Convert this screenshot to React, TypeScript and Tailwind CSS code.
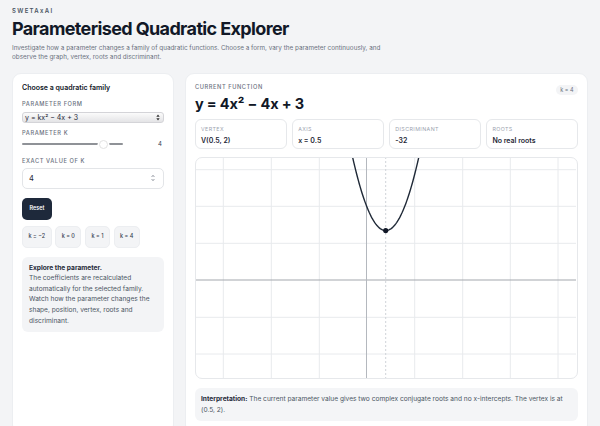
import React from "react";

const GX = 171.5; // y-axis pixel (relative to graph box)
const GY = 123; // x-axis pixel
const SX = 38.4;
const SY = 24.7;

function curvePath() {
  const pts: string[] = [];
  for (let i = 0; i <= 80; i++) {
    const x = -0.45 + (i / 80) * 1.9;
    const y = 4 * x * x - 4 * x + 3;
    const X = GX + SX * x;
    const Y = GY - SY * y;
    pts.push(`${i === 0 ? "M" : "L"}${X.toFixed(2)} ${Y.toFixed(2)}`);
  }
  return pts.join(" ");
}

function Graph() {
  const vx = [28.3, 76.3, 124.3, 219.7, 267.7, 315.3, 363];
  const hy = [12.7, 49.3, 86.3, 160.3, 197];
  return (
    <div className="mt-[8px] h-[222px] rounded-[7px] border border-[#e6e8eb] bg-white overflow-hidden">
      <svg viewBox="1 1 380 220" width="380" height="220" className="block">
        {vx.map((x) => (
          <line key={"v" + x} x1={x} y1={0} x2={x} y2={222} stroke="#e8eaed" strokeWidth={1} />
        ))}
        {hy.map((y) => (
          <line key={"h" + y} x1={0} y1={y} x2={382} y2={y} stroke="#e8eaed" strokeWidth={1} />
        ))}
        <line x1={0} y1={GY} x2={382} y2={GY} stroke="#a3a7ad" strokeWidth={1} />
        <line x1={GX} y1={0} x2={GX} y2={222} stroke="#b4b8be" strokeWidth={1} />
        <line x1={GX + SX * 0.5} y1={0} x2={GX + SX * 0.5} y2={222} stroke="#cfd3d8" strokeWidth={1} strokeDasharray="2 2" />
        <path d={curvePath()} fill="none" stroke="#1f2937" strokeWidth={1.4} />
        <circle cx={GX + SX * 0.5} cy={GY - SY * 2} r={2.6} fill="#111827" />
      </svg>
    </div>
  );
}

function Stat({ label, value }: { label: string; value: string }) {
  return (
    <div className="h-[29.5px] rounded-[6px] border border-[#e6e8eb] bg-white px-[5px] pt-[6px]">
      <div className="text-[5.3px] leading-[7px] tracking-[0.08em] uppercase text-[#9ca3af]">{label}</div>
      <div className="mt-[2.5px] text-[7px] leading-[9px] font-semibold text-[#1f2937]">{value}</div>
    </div>
  );
}

function Label({ children, className = "" }: { children: React.ReactNode; className?: string }) {
  return (
    <div className={"text-[5.7px] leading-[8px] font-medium tracking-[0.1em] uppercase text-[#6b7280] " + className}>
      {children}
    </div>
  );
}

export default function App() {
  return (
    <div className="min-h-[450px] bg-[#f3f4f6] px-3 pt-[7px] font-[Inter,sans-serif] text-[#111827]">
      <div className="text-[6px] leading-[8px] font-semibold tracking-[0.22em] text-[#4b5563]">SWETAxAI</div>
      <h1 className="mt-[3px] text-[18px] leading-[22px] font-bold tracking-[-0.035em] text-[#111827]">
        Parameterised Quadratic Explorer
      </h1>
      <p className="mt-[4px] max-w-[380px] text-[6.35px] leading-[9px] text-[#6b7280]">
        Investigate how a parameter changes a family of quadratic functions. Choose a form, vary the parameter continuously, and observe the graph, vertex, roots and discriminant.
      </p>

      <div className="mt-[11px] grid grid-cols-[162px_1fr] gap-[11px]">
        {/* Left panel */}
        <div className="rounded-[9px] border border-[#eceef1] bg-white px-[9px] pt-[9px] pb-[10px]">
          <div className="text-[7px] leading-[10px] font-semibold text-[#111827]">Choose a quadratic family</div>
          <Label className="mt-[7px]">Parameter form</Label>
          <div className="mt-[4px] flex h-[10.6px] items-center justify-between rounded-[3px] border border-[#d4d4d8] bg-gradient-to-b from-[#fbfbfb] to-[#e4e4e6] pl-[2px] pr-[3px]">
            <span className="text-[7px] leading-[9px] text-[#1f2937]">y = kx² − 4x + 3</span>
            <svg width="4" height="7" viewBox="0 0 4 7">
              <path d="M0.3 2.8 L2 0.6 L3.7 2.8 Z" fill="#333" />
              <path d="M0.3 4.2 L2 6.4 L3.7 4.2 Z" fill="#333" />
            </svg>
          </div>
          <Label className="mt-[6px]">Parameter k</Label>
          <div className="mt-[2.5px] flex h-[10px] items-center">
            <div className="relative h-[10px] w-[101px]">
              <div className="absolute left-0 right-0 top-[4.3px] h-[1.5px] rounded-full bg-[#8f9297]" />
              <div className="absolute left-[76.5px] top-[0.5px] h-[9px] w-[9px] rounded-full border border-[#e2e2e2] bg-white shadow-[0_0_0_1.5px_#ffffff]" />
            </div>
            <span className="ml-auto mr-[2px] text-[6px] leading-[8px] text-[#374151]">4</span>
          </div>
          <Label className="mt-[7.5px]">Exact value of k</Label>
          <div className="mt-[3px] flex h-[21px] items-center justify-between rounded-[5px] border border-[#e3e5e8] bg-white pl-[6px] pr-[8px]">
            <span className="text-[7.5px] leading-[9px] text-[#1f2937]">4</span>
            <svg width="4" height="8" viewBox="0 0 4 8">
              <path d="M0.6 3 L2 1.3 L3.4 3" fill="none" stroke="#6b7280" strokeWidth="0.7" />
              <path d="M0.6 5 L2 6.7 L3.4 5" fill="none" stroke="#6b7280" strokeWidth="0.7" />
            </svg>
          </div>
          <button className="mt-[9px] flex h-[22px] w-[30px] items-center justify-center rounded-[5px] bg-[#1e293b] text-[5.5px] font-semibold text-white">
            Reset
          </button>
          <div className="mt-[6px] flex gap-[3.6px]">
            {["k = −2", "k = 0", "k = 1", "k = 4"].map((t) => (
              <div
                key={t}
                className="flex h-[22px] items-center rounded-[5px] border border-[#eceef1] bg-[#f3f4f6] px-[5.5px] text-[5.5px] font-medium text-[#374151]"
              >
                {t}
              </div>
            ))}
          </div>
          <div className="mt-[9px] rounded-[6px] bg-[#f3f4f6] px-[7px] pt-[6px] pb-[5.5px] text-[6.6px] leading-[10.6px] text-[#4b5563]">
            <div className="font-bold text-[#1f2937]">Explore the parameter.</div>
            <div>
              The coefficients are recalculated automatically for the selected family. Watch how the parameter changes the shape, position, vertex, roots and discriminant.
            </div>
          </div>
        </div>

        {/* Right panel */}
        <div className="rounded-[9px] border border-[#eceef1] bg-white px-[9px] pt-[9px] pb-[12px]">
          <div className="flex items-start justify-between">
            <div>
              <Label>Current function</Label>
              <div className="mt-[4px] text-[14.5px] leading-[18px] font-bold tracking-[-0.01em] text-[#111827]">
                y = 4x² − 4x + 3
              </div>
            </div>
            <div className="mt-[2px] flex h-[10px] items-center rounded-full bg-[#f3f4f6] px-[4.5px] text-[5.5px] text-[#6b7280]">
              k = 4
            </div>
          </div>
          <div className="mt-[6px] grid grid-cols-4 gap-[5.5px]">
            <Stat label="Vertex" value="V(0.5, 2)" />
            <Stat label="Axis" value="x = 0.5" />
            <Stat label="Discriminant" value="-32" />
            <Stat label="Roots" value="No real roots" />
          </div>
          <Graph />
          <div className="mt-[9px] rounded-[6px] bg-[#f4f5f7] px-[6px] pt-[6px] pb-[5.5px] text-[6.6px] leading-[11px] text-[#4b5563]">
            <span className="font-bold text-[#1f2937]">Interpretation:</span> The current parameter value gives two complex conjugate roots and no x-intercepts. The vertex is at (0.5, 2).
          </div>
        </div>
      </div>
    </div>
  );
}
